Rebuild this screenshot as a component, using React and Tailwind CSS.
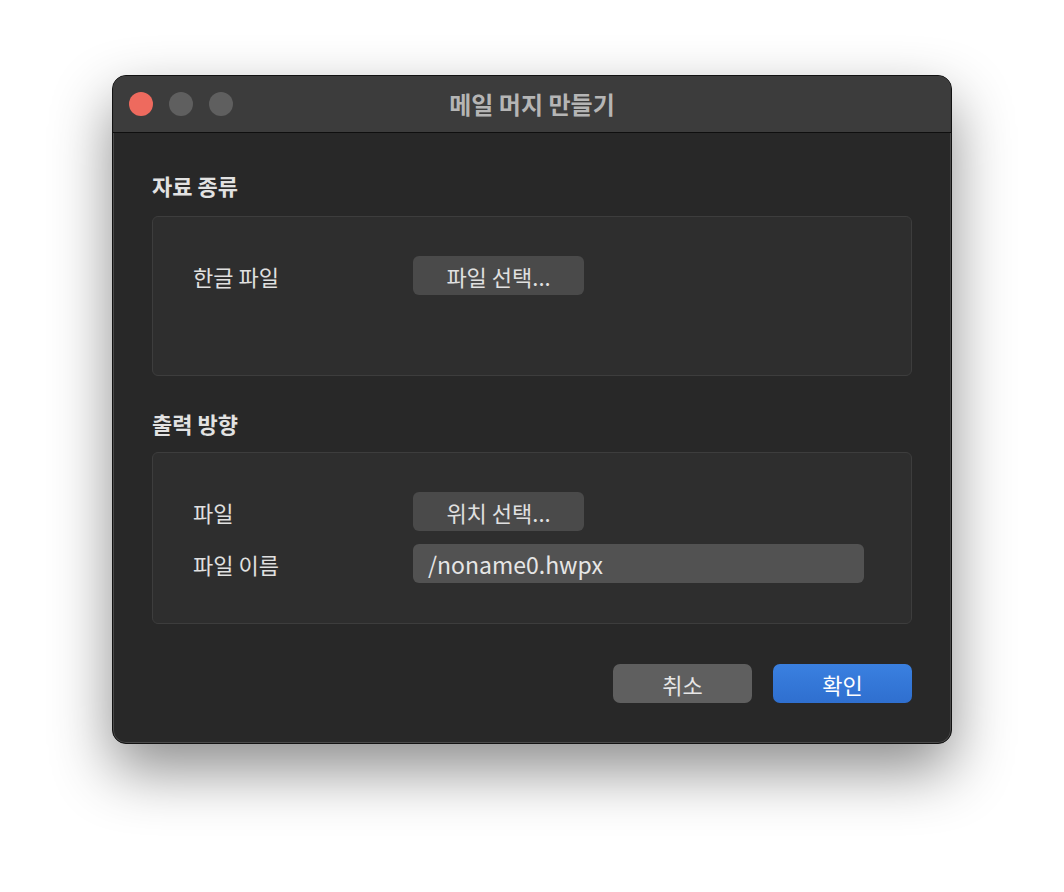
export default function App() {
  const font = { fontFamily: '"Noto Sans CJK KR", "Noto Sans", sans-serif' }
  return (
    <div className="flex min-h-[892px] w-full justify-center bg-white pt-[75px]" style={font}>
      <div className="flex h-[669px] w-[840px] flex-col overflow-hidden rounded-[14px] border border-[#121212] bg-[#282828] shadow-[0_26px_60px_rgba(0,0,0,0.45)] ring-1 ring-inset ring-[#4a4a4a]">
        <div className="relative flex h-[57px] shrink-0 items-center justify-center border-b border-[#0f0f0f] bg-[#3c3c3c]">
          <div className="absolute left-[16px] top-[16px] flex gap-[16px]">
            <span className="h-[24px] w-[24px] rounded-full bg-[#ee6a5e]" />
            <span className="h-[24px] w-[24px] rounded-full bg-[#5f5f5f]" />
            <span className="h-[24px] w-[24px] rounded-full bg-[#5f5f5f]" />
          </div>
          <h1 className="text-[24px] leading-[32px] font-bold text-[#b5b5b5]">메일 머지 만들기</h1>
        </div>

        <div className="flex flex-col px-[39px] pt-[38px]">
          <h2 className="text-[22px] leading-[28px] font-bold text-[#e2e2e2]">자료 종류</h2>
          <div className="mt-[17px] h-[160px] rounded-[6px] border border-[#3d3d3d] bg-[#2e2e2e] px-[40px] pt-[39px]">
            <div className="flex items-center">
              <span className="w-[220px] text-[22px] leading-[28px] text-[#e0e0e0]">한글 파일</span>
              <button className="h-[39px] w-[171px] rounded-[6px] bg-[#4a4a4a] text-[22px] leading-[28px] text-[#e0e0e0]">
                파일 선택...
              </button>
            </div>
          </div>

          <h2 className="mt-[33px] text-[22px] leading-[28px] font-bold text-[#e2e2e2]">출력 방향</h2>
          <div className="mt-[15px] h-[172px] rounded-[6px] border border-[#3d3d3d] bg-[#2e2e2e] px-[40px] pt-[39px]">
            <div className="flex items-center">
              <span className="w-[220px] text-[22px] leading-[28px] text-[#e0e0e0]">파일</span>
              <button className="h-[39px] w-[171px] rounded-[6px] bg-[#4a4a4a] text-[22px] leading-[28px] text-[#e0e0e0]">
                위치 선택...
              </button>
            </div>
            <div className="mt-[13px] flex items-center">
              <span className="w-[220px] text-[22px] leading-[28px] text-[#e0e0e0]">파일 이름</span>
              <div className="flex h-[39px] w-[451px] items-center rounded-[6px] bg-[#525252] px-[15px] text-[23px] leading-[28px] text-[#e6e6e6]">
                /noname0.hwpx
              </div>
            </div>
          </div>

          <div className="mt-[40px] flex justify-end gap-[21px]">
            <button className="h-[39px] w-[139px] rounded-[7px] bg-[#5f5f5f] text-[22px] leading-[28px] text-[#e6e6e6]">취소</button>
            <button className="h-[39px] w-[139px] rounded-[7px] bg-gradient-to-b from-[#3a80e0] to-[#2f6fcf] text-[22px] leading-[28px] text-white">
              확인
            </button>
          </div>
        </div>
      </div>
    </div>
  )
}
